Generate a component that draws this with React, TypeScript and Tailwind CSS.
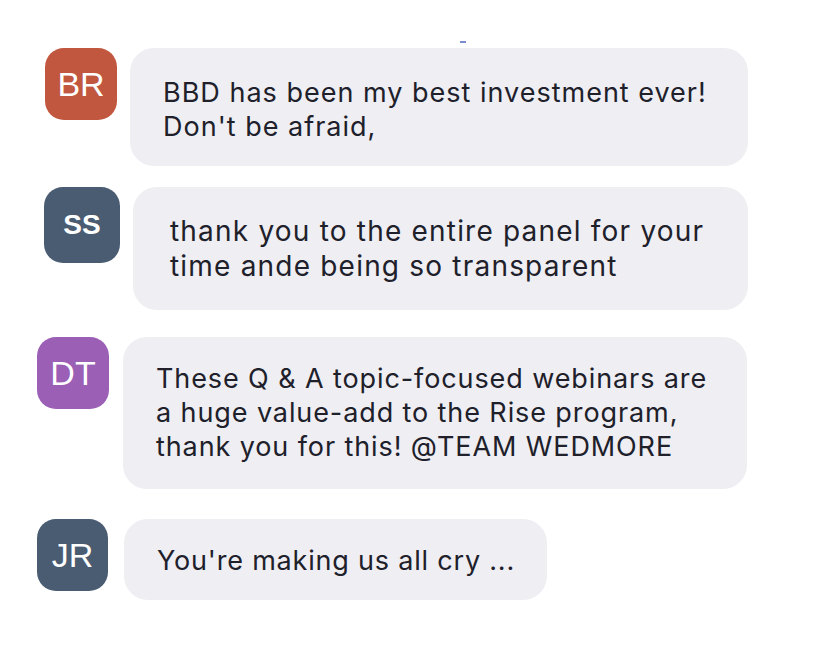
import React from 'react';

type Msg = {
  initials: string;
  avatarClass: string;
  initialsClass: string;
  rowClass: string;
  bubbleClass: string;
  lines: string[];
};

const messages: Msg[] = [
  {
    initials: 'BR',
    avatarClass: 'ml-[45px] w-[72px] h-[72px] bg-[#c1573f]',
    initialsClass: 'text-[34px]',
    rowClass: 'mt-[48px] gap-[13px]',
    bubbleClass: 'w-[618px] h-[118px] pl-[33px] pt-[6px] text-[27px] leading-[34px] tracking-[1px]',
    lines: ['BBD has been my best investment ever!', "Don't be afraid,"],
  },
  {
    initials: 'SS',
    avatarClass: 'ml-[44px] w-[76px] h-[76px] bg-[#4a5c72]',
    initialsClass: 'text-[28px] font-bold',
    rowClass: 'mt-[21px] gap-[13px]',
    bubbleClass: 'w-[615px] h-[123px] pl-[37px] text-[28px] leading-[35px] tracking-[1.2px]',
    lines: ['thank you to the entire panel for your', 'time ande being so transparent'],
  },
  {
    initials: 'DT',
    avatarClass: 'ml-[37px] w-[72px] h-[72px] bg-[#9b5fb6]',
    initialsClass: 'text-[34px]',
    rowClass: 'mt-[27px] gap-[14px]',
    bubbleClass: 'w-[624px] h-[152px] pl-[33px] text-[27px] leading-[34px] tracking-[0.9px]',
    lines: [
      'These Q & A topic-focused webinars are',
      'a huge value-add to the Rise program,',
      'thank you for this! @TEAM WEDMORE',
    ],
  },
  {
    initials: 'JR',
    avatarClass: 'ml-[37px] w-[71px] h-[72px] bg-[#4a5c72]',
    initialsClass: 'text-[34px]',
    rowClass: 'mt-[30px] gap-[16px]',
    bubbleClass: 'w-[423px] h-[81px] pl-[33px] pt-[2px] text-[27px] leading-[34px] tracking-[0.8px]',
    lines: ["You're making us all cry ..."],
  },
];

export default function App() {
  return (
    <div className="relative w-[826px] h-[656px] bg-white overflow-hidden font-['Inter',sans-serif] text-[#20202a]">
      {/* stray mark at top */}
      <div className="absolute left-[460px] top-[41px] w-[6px] h-[2px] bg-[#5b6fc4] opacity-80" />
      <div className="flex flex-col">
        {messages.map((m) => (
          <div key={m.initials} className={`flex items-start ${m.rowClass}`}>
            <div
              className={`shrink-0 rounded-[19px] flex items-center justify-center text-white font-['Liberation_Sans',Arial,sans-serif] ${m.avatarClass}`}
            >
              <span className={m.initialsClass}>{m.initials}</span>
            </div>
            <div className={`shrink-0 rounded-[24px] bg-[#eeeef3] flex flex-col justify-center ${m.bubbleClass}`}>
              {m.lines.map((l) => (
                <div key={l} className="whitespace-nowrap">
                  {l}
                </div>
              ))}
            </div>
          </div>
        ))}
      </div>
    </div>
  );
}
